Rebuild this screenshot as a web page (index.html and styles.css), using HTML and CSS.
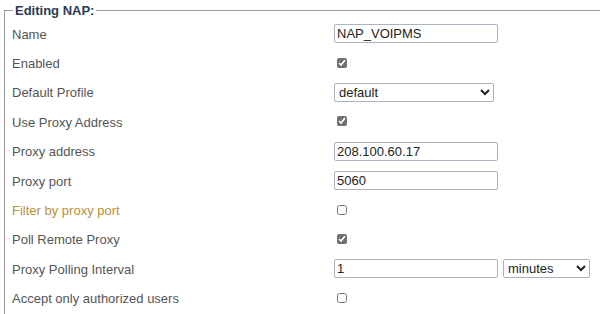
FILE: index.html
```html
<!DOCTYPE html>
<html>
<head>
    <meta charset="utf-8">
    <title>Editing NAP</title>
    <link rel="stylesheet" href="styles.css">
</head>
<body>
    <fieldset class="napBox">
        <legend>Editing NAP:</legend>
        <div class="formGrid">
            <label>Name</label>
            <div><input type="text" class="txt" value="NAP_VOIPMS"></div>

            <label>Enabled</label>
            <div><input type="checkbox" class="chk" checked></div>

            <label>Default Profile</label>
            <div>
                <select class="sel wideSel">
                    <option>default</option>
                </select>
            </div>

            <label>Use Proxy Address</label>
            <div><input type="checkbox" class="chk" checked></div>

            <label>Proxy address</label>
            <div><input type="text" class="txt" value="208.100.60.17"></div>

            <label>Proxy port</label>
            <div><input type="text" class="txt" value="5060"></div>

            <label class="warn">Filter by proxy port</label>
            <div><input type="checkbox" class="chk"></div>

            <label>Poll Remote Proxy</label>
            <div><input type="checkbox" class="chk" checked></div>

            <label>Proxy Polling Interval</label>
            <div class="pair">
                <input type="text" class="txt" value="1">
                <select class="sel unitSel">
                    <option>minutes</option>
                </select>
            </div>

            <label>Accept only authorized users</label>
            <div><input type="checkbox" class="chk"></div>
        </div>
    </fieldset>
</body>
</html>
```

FILE: styles.css
```css
body{
    margin: 0;
    padding: 0 0 0 4px;
    font-family: "Liberation Sans", Arial, sans-serif;
    font-size: 13px;
    color: #555;
    background: #fff;
}

.napBox{
    margin: 3px -20px 0 0;
    padding: 1px 0 30px 7px;
    border: 1px solid #999;
    border-right: none;
}

.napBox legend{
    padding: 0 2px;
    margin-left: 1px;
    font-weight: bold;
    font-size: 13px;
    color: #2b3a55;
}

.formGrid{
    display: grid;
    grid-template-columns: 322px 1fr;
    grid-auto-rows: 29.4px;
    align-items: center;
}

.formGrid label{
    padding-top: 1px;
}

.warn{
    color: #b8903a;
}

.txt{
    box-sizing: border-box;
    width: 164px;
    height: 19px;
    margin: 0;
    padding: 0 2px;
    border: 1px solid #a9b4c2;
    border-radius: 2px;
    font-family: "Liberation Sans", Arial, sans-serif;
    font-size: 13px;
    color: #222;
}

.sel{
    box-sizing: border-box;
    height: 19px;
    margin: 0;
    border: 1px solid #a9b4c2;
    border-radius: 2px;
    font-family: "Liberation Sans", Arial, sans-serif;
    font-size: 13px;
    color: #222;
    background: #fff;
}

.wideSel{
    width: 160px;
}

.unitSel{
    width: 87px;
}

.pair{
    display: flex;
    gap: 5px;
}

.chk{
    width: 10px;
    height: 10px;
    margin: 0 0 0 3px;
    accent-color: #707070;
}
```
